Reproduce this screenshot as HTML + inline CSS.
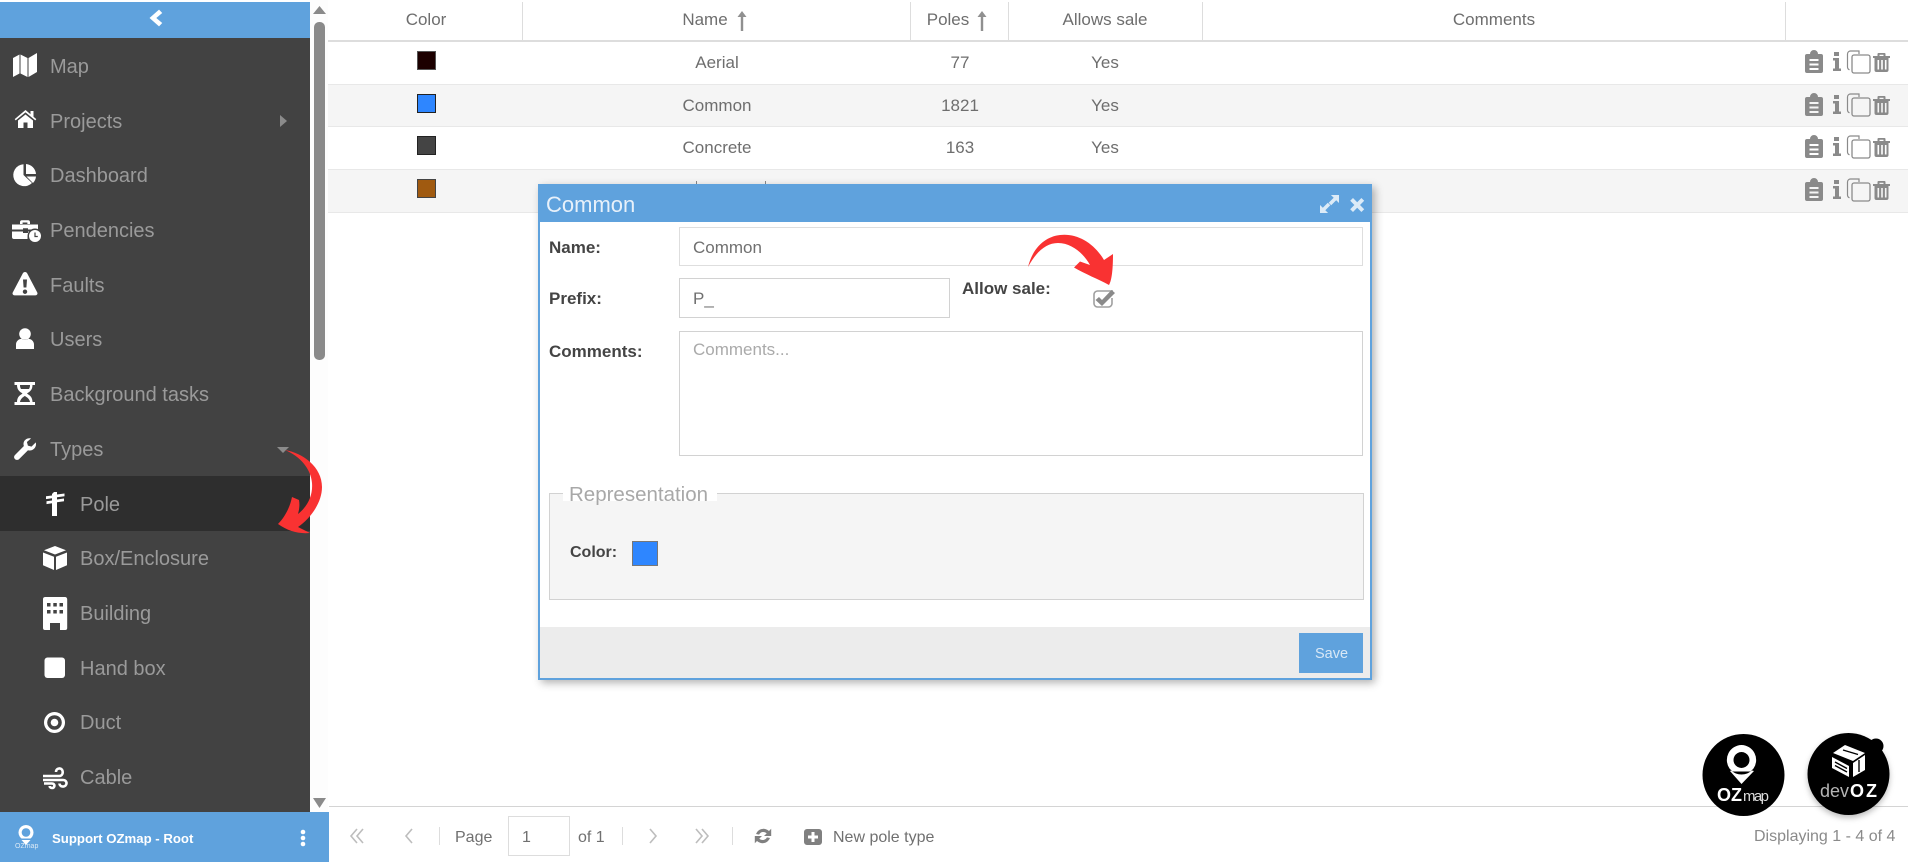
<!DOCTYPE html>
<html><head><meta charset="utf-8"><title>Pole types</title>
<style>
html,body{margin:0;padding:0;width:1908px;height:862px;overflow:hidden;background:#fff}
body{position:relative;font-family:"Liberation Sans",sans-serif;color:#666}
.a{position:absolute}
.t{position:absolute;white-space:nowrap}
.s{font-size:20px;line-height:30px;color:#9a9a9a;height:30px}
.c{transform:translateX(-50%);font-size:17px;line-height:24px;color:#6e6e6e}
.l{font-weight:bold;font-size:17px;line-height:24px;color:#444}
.b{font-size:16px;line-height:24px;color:#707070}
svg{position:absolute;left:0;top:0}
</style></head><body>
<!-- table rows -->
<div class="a" style="left:328px;top:40px;width:1580px;height:2px;background:#ddd"></div>
<div class="a" style="left:328px;top:84px;width:1580px;height:43px;background:#f5f5f5;border-top:1px solid #e8e8e8;border-bottom:1px solid #e8e8e8;box-sizing:border-box"></div>
<div class="a" style="left:328px;top:169px;width:1580px;height:44px;background:#f5f5f5;border-top:1px solid #e8e8e8;border-bottom:1px solid #e8e8e8;box-sizing:border-box"></div>
<div class="a" style="left:522px;top:2px;width:1px;height:38px;background:#ddd"></div>
<div class="a" style="left:910px;top:2px;width:1px;height:38px;background:#ddd"></div>
<div class="a" style="left:1008px;top:2px;width:1px;height:38px;background:#ddd"></div>
<div class="a" style="left:1202px;top:2px;width:1px;height:38px;background:#ddd"></div>
<div class="a" style="left:1785px;top:2px;width:1px;height:38px;background:#ddd"></div>
<span class="t c" style="left:426px;top:8px">Color</span>
<span class="t c" style="left:705px;top:8px">Name</span>
<span class="t c" style="left:948px;top:8px">Poles</span>
<span class="t c" style="left:1105px;top:8px">Allows sale</span>
<span class="t c" style="left:1494px;top:8px">Comments</span>
<span class="t c" style="left:717px;top:51px">Aerial</span><span class="t c" style="left:960px;top:51px">77</span><span class="t c" style="left:1105px;top:51px">Yes</span>
<span class="t c" style="left:717px;top:94px">Common</span><span class="t c" style="left:960px;top:94px">1821</span><span class="t c" style="left:1105px;top:94px">Yes</span>
<span class="t c" style="left:717px;top:136px">Concrete</span><span class="t c" style="left:960px;top:136px">163</span><span class="t c" style="left:1105px;top:136px">Yes</span>
<div class="a" style="left:696px;top:181px;width:1px;height:3px;background:#888"></div>
<div class="a" style="left:765px;top:181px;width:1px;height:3px;background:#888"></div>
<div class="a" style="left:417px;top:51px;width:19px;height:19px;box-sizing:border-box;border:1px solid #555;background:#1c0000"></div>
<div class="a" style="left:417px;top:94px;width:19px;height:19px;box-sizing:border-box;border:1px solid #222;background:#2e86ff"></div>
<div class="a" style="left:417px;top:136px;width:19px;height:19px;box-sizing:border-box;border:1px solid #222;background:#444"></div>
<div class="a" style="left:417px;top:179px;width:19px;height:19px;box-sizing:border-box;border:1px solid #444;background:#a05a10"></div>

<!-- sidebar -->
<div class="a" style="left:0;top:38px;width:310px;height:774px;background:#424242"></div>
<div class="a" style="left:0;top:2px;width:310px;height:36px;background:#5fa2dd"></div>
<div class="a" style="left:0;top:476px;width:310px;height:55px;background:#2e2e2e"></div>
<div class="a" style="left:310px;top:0;width:18px;height:812px;background:#fdfdfd"></div>
<div class="a" style="left:314px;top:22px;width:11px;height:338px;background:#8a8a8a;border-radius:5px"></div>
<div class="a" style="left:0;top:812px;width:329px;height:50px;background:#5fa2dd"></div>
<span class="t s" style="left:50px;top:52px">Map</span>
<span class="t s" style="left:50px;top:107px">Projects</span>
<span class="t s" style="left:50px;top:161px">Dashboard</span>
<span class="t s" style="left:50px;top:216px">Pendencies</span>
<span class="t s" style="left:50px;top:271px">Faults</span>
<span class="t s" style="left:50px;top:325px">Users</span>
<span class="t s" style="left:50px;top:380px">Background tasks</span>
<span class="t s" style="left:50px;top:435px">Types</span>
<span class="t s" style="left:80px;top:490px">Pole</span>
<span class="t s" style="left:80px;top:544px">Box/Enclosure</span>
<span class="t s" style="left:80px;top:599px">Building</span>
<span class="t s" style="left:80px;top:654px">Hand box</span>
<span class="t s" style="left:80px;top:708px">Duct</span>
<span class="t s" style="left:80px;top:763px">Cable</span>
<span class="t" style="left:52px;top:830px;font-size:13.2px;font-weight:bold;color:#fff;line-height:18px">Support OZmap - Root</span>
<span class="t" style="left:15px;top:842px;font-size:7px;color:#dbe9f6;line-height:10px">OZmap</span>

<!-- bottom toolbar -->
<div class="a" style="left:329px;top:806px;width:1579px;height:1px;background:#d4d4d4"></div>
<span class="t b" style="left:455px;top:826px">Page</span>
<div class="a" style="left:508px;top:816px;width:62px;height:40px;box-sizing:border-box;border:1px solid #ddd;background:#fff"></div>
<span class="t b" style="left:522px;top:826px">1</span>
<span class="t b" style="left:578px;top:826px">of 1</span>
<span class="t b" style="left:833px;top:826px">New pole type</span>
<span class="t b" style="left:1754px;top:825px;color:#8a8a8a">Displaying 1 - 4 of 4</span>
<div class="a" style="left:439px;top:827px;width:1px;height:18px;background:#ddd"></div>
<div class="a" style="left:622px;top:827px;width:1px;height:18px;background:#ddd"></div>
<div class="a" style="left:732px;top:827px;width:1px;height:18px;background:#ddd"></div>

<svg width="1908" height="862" viewBox="0 0 1908 862">
 <!-- header sort arrows -->
 <g fill="#909090"><path d="M742 11l-4.500 6h3.300v14h2.400V17h3.300z"/><path d="M982 11l-4.500 6h3.300v14h2.400V17h3.300z"/></g>
 <!-- scrollbar arrows -->
 <path d="M313 14h13l-6.500-8z" fill="#8a8a8a"/><path d="M313 798h13l-6.500 10z" fill="#8a8a8a"/>
 <!-- sidebar icons -->
 <g fill="#fff">
  <path d="M150 18l9-8 2.800 3-6 5 6 5-2.800 3z" stroke="#fff" stroke-width=".6"/>
  <path d="M13 58l6.500-3.500v19L13 77zM20.500 54.500l7 3.500v19l-7-3.500zM28.500 58l8.500-5v19l-8.500 5z"/>
  <path d="M25.500 110l5 4.200V111h3v5.700l2.800 2.400-1 1.300-9.800-8-9.800 8-1-1.300zM18 120.500l7.500-6 7.500 6V128h-5.500v-5.500h-4V128H18z"/>
  <path d="M23.500 164.200A11 11 0 1 0 32 183L23.500 175zM26 164a11 11 0 0 1 10 10H26zM26.500 176.500H36a11 11 0 0 1-3 6.500z"/>
  <path d="M20 224v-2c0-1 .8-1.800 1.800-1.800h6.400c1 0 1.800.8 1.800 1.800v2h-2.600v-1.500h-4.800V224zM12 224.500h26v5H28v-1.200h-5v1.200H12zM12 231.500h11v1.500h5v-1.500h4a8 8 0 0 0-4.500 7.500H14a2 2 0 0 1-2-2z"/>
 </g>
 <circle cx="35" cy="236" r="7.500" fill="#424242"/><circle cx="35" cy="236" r="6" fill="#fff"/>
 <path d="M35 232.500V236.500h2.800" fill="none" stroke="#424242" stroke-width="1.200"/>
 <g fill="#fff">
  <path d="M25 272c1 0 1.700.5 2.200 1.400l10 19c.8 1.400-.2 3-1.800 3H14.600c-1.600 0-2.600-1.600-1.800-3l10-19c.5-.9 1.300-1.400 2.200-1.400zm-2 7.500l.6 8h2.800l.6-8zm2 10a2.200 2.200 0 1 0 .01 0z" fill-rule="evenodd"/>
  <circle cx="25" cy="334" r="5.800"/><path d="M16 349v-4.500c0-3.500 2.800-5.500 5.500-5.800 1 .8 2.200 1.200 3.500 1.200s2.500-.4 3.500-1.200c2.700.3 5.500 2.300 5.500 5.800v4.500z"/>
  <path d="M14.500 382h20.500v3h-2.500c0 5.500-3.500 7-5.500 8.500 2 1.500 5.500 3 5.500 8.500h2.500v3H14.500v-3H17c0-5.500 3.500-7 5.500-8.500-2-1.500-5.500-3-5.500-8.500h-2.500zm5.500 3c0 1.500.2 2.700 1 4h8c.8-1.300 1-2.500 1-4zm4.800 11c-2.200 1.300-4.300 3-4.800 6h10c-.5-3-2.800-4.700-5.200-6z" fill-rule="evenodd"/>
  <path d="M31 438.500c-3.500-1-7.500 1.500-7.500 5.500 0 .8.100 1.400.4 2L15 455c-1.200 1.200-1.200 3 0 4.100 1.100 1.100 3 1.100 4.100 0l8.900-8.900c3.500 1.200 8-1.600 8-6 0-.7-.1-1.300-.2-1.800l-4.300 4.200-3.600-1-1-3.600z"/>
  <path d="M54 492h3v2.500l7.500-1v2.800l-7.500 1v2.200l7-1v2.800l-7 1V516h-5V503.300l-5.500.8v-2.800l5.500-.8v-2.200l-6 .8v-2.800l6-.8v-1.500z"/>
  <path d="M55 546l11 4.200-11 4.300-11-4.300zM43 552.500l11 4.300V570l-11-4.800zM67 552.500l-11 4.300V570l11-4.800z"/>
  <path d="M45 597h20a2.200 2.200 0 0 1 2.200 2.200V628a2 2 0 0 1-2 2H60v-7h-10v7h-5a2 2 0 0 1-2-2V599.200A2.200 2.200 0 0 1 45 597zM47 603v3.500h3.500V603zm6.300 0v3.500h3.500V603zm6.200 0v3.500H63V603zM47 610v3.500h3.500V610zm6.300 0v3.500h3.500V610zm6.200 0v3.500H63V610z" fill-rule="evenodd"/>
  <rect x="44.500" y="657.500" width="20.500" height="20.500" rx="3"/>
  <path d="M54.500 712a10.500 10.500 0 1 0 .01 0zm0 3.200a7.300 7.300 0 1 1-.01 0z" fill-rule="evenodd"/><circle cx="54.500" cy="722.500" r="3.800"/>
 </g>
 <g fill="none" stroke="#fff" stroke-width="2.600">
  <path d="M43 776h16c5 0 5-8 0-7.500-2.500.2-3 2.500-3 3.500M43 780h20c5 0 4.500 7-.5 6.500-2.200-.2-3-2-3-3"/>
  <path d="M44 783.500h8c3.200 0 3.200 4.500 0 4.500-1.500 0-2.300-1-2.300-2"/>
 </g>
 <path d="M280 115l7 6-7 6z" fill="#8b8b8b"/><path d="M277 447h12l-6 6z" fill="#8b8b8b"/>
 <!-- footer -->
 <g>
  <path d="M26 825a7.500 7.500 0 0 0-4.500 13.500h9A7.500 7.500 0 0 0 26 825zm0 3.200a4.300 4.300 0 1 1-.01 0z" fill="#fff" fill-rule="evenodd"/>
  <path d="M21.500 840h9l-4.500 5z" fill="#fff"/>
  <circle cx="303" cy="832" r="2.300" fill="#fff"/><circle cx="303" cy="838" r="2.300" fill="#fff"/><circle cx="303" cy="844" r="2.300" fill="#fff"/>
 </g>
 <!-- toolbar icons -->
 <g fill="none" stroke="#bdbdbd" stroke-width="1.600">
  <path d="M357 829l-6 7 6 7M363 829l-6 7 6 7"/><path d="M412 829l-6 7 6 7"/>
  <path d="M650 829l6 7-6 7"/><path d="M696 829l6 7-6 7M702 829l6 7-6 7"/>
 </g>
 <g fill="#808080">
  <path d="M756 834a8 8 0 0 1 13-3l2.200-2.200V836h-7.200l2.700-2.600a4.700 4.700 0 0 0-7.600 1.200zM770 838a8 8 0 0 1-13 3l-2.200 2.200V836h7.200l-2.700 2.600a4.700 4.700 0 0 0 7.600-1.200z"/>
  <path d="M807 829h12a3 3 0 0 1 3 3v10a3 3 0 0 1-3 3h-12a3 3 0 0 1-3-3v-10a3 3 0 0 1 3-3zm4.500 3v3.500H808v3h3.500V842h3v-3.500h3.500v-3h-3.500V832z" fill-rule="evenodd"/>
 </g>
 <!-- row action icons -->
 <g fill="#8a8a8a">
  <path d="M1807 54h3a4 4 0 0 1 8 0h3a2 2 0 0 1 2 2v15a2 2 0 0 1-2 2h-14a2 2 0 0 1-2-2V56a2 2 0 0 1 2-2zm2.500 5v2h9v-2zm0 4.500v2h9v-2zm0 4.500v2h9v-2z" fill-rule="evenodd"/>
  <path d="M1834 52h5v4h-5zM1833 58h6v10.500h2V71h-8v-2.500h2V60.500h-2z"/>
  <path d="M1859 54v-3h-8.500a3 3 0 0 0-3 3v13a3 3 0 0 0 2 2.800" fill="none" stroke="#8a8a8a" stroke-width="1.200"/>
  <rect x="1852" y="55" width="18" height="18" rx="2" fill="none" stroke="#8a8a8a" stroke-width="1.300"/>
  <path d="M1878.500 53h6a1 1 0 0 1 1 1v2h4.500v2h-1.500v12a2 2 0 0 1-2 2h-10a2 2 0 0 1-2-2V58h-1.500v-2h4.500v-2a1 1 0 0 1 1-1zm1 3h4v-1.200h-4zm-2 4v9.500h1.600V60zm3.700 0v9.500h1.600V60zm3.700 0v9.500h1.600V60z" fill-rule="evenodd"/>
 </g>
 <g fill="#8a8a8a" transform="translate(0,43)">
  <path d="M1807 54h3a4 4 0 0 1 8 0h3a2 2 0 0 1 2 2v15a2 2 0 0 1-2 2h-14a2 2 0 0 1-2-2V56a2 2 0 0 1 2-2zm2.500 5v2h9v-2zm0 4.500v2h9v-2zm0 4.500v2h9v-2z" fill-rule="evenodd"/>
  <path d="M1834 52h5v4h-5zM1833 58h6v10.500h2V71h-8v-2.500h2V60.500h-2z"/>
  <path d="M1859 54v-3h-8.500a3 3 0 0 0-3 3v13a3 3 0 0 0 2 2.800" fill="none" stroke="#8a8a8a" stroke-width="1.200"/>
  <rect x="1852" y="55" width="18" height="18" rx="2" fill="none" stroke="#8a8a8a" stroke-width="1.300"/>
  <path d="M1878.500 53h6a1 1 0 0 1 1 1v2h4.500v2h-1.500v12a2 2 0 0 1-2 2h-10a2 2 0 0 1-2-2V58h-1.500v-2h4.500v-2a1 1 0 0 1 1-1zm1 3h4v-1.200h-4zm-2 4v9.500h1.600V60zm3.700 0v9.500h1.600V60zm3.700 0v9.500h1.600V60z" fill-rule="evenodd"/>
 </g>
 <g fill="#8a8a8a" transform="translate(0,85)">
  <path d="M1807 54h3a4 4 0 0 1 8 0h3a2 2 0 0 1 2 2v15a2 2 0 0 1-2 2h-14a2 2 0 0 1-2-2V56a2 2 0 0 1 2-2zm2.500 5v2h9v-2zm0 4.500v2h9v-2zm0 4.500v2h9v-2z" fill-rule="evenodd"/>
  <path d="M1834 52h5v4h-5zM1833 58h6v10.500h2V71h-8v-2.500h2V60.500h-2z"/>
  <path d="M1859 54v-3h-8.500a3 3 0 0 0-3 3v13a3 3 0 0 0 2 2.800" fill="none" stroke="#8a8a8a" stroke-width="1.200"/>
  <rect x="1852" y="55" width="18" height="18" rx="2" fill="none" stroke="#8a8a8a" stroke-width="1.300"/>
  <path d="M1878.500 53h6a1 1 0 0 1 1 1v2h4.500v2h-1.500v12a2 2 0 0 1-2 2h-10a2 2 0 0 1-2-2V58h-1.500v-2h4.500v-2a1 1 0 0 1 1-1zm1 3h4v-1.200h-4zm-2 4v9.500h1.600V60zm3.700 0v9.500h1.600V60zm3.700 0v9.500h1.600V60z" fill-rule="evenodd"/>
 </g>
 <g fill="#8a8a8a" transform="translate(0,128)">
  <path d="M1807 54h3a4 4 0 0 1 8 0h3a2 2 0 0 1 2 2v15a2 2 0 0 1-2 2h-14a2 2 0 0 1-2-2V56a2 2 0 0 1 2-2zm2.500 5v2h9v-2zm0 4.500v2h9v-2zm0 4.500v2h9v-2z" fill-rule="evenodd"/>
  <path d="M1834 52h5v4h-5zM1833 58h6v10.500h2V71h-8v-2.500h2V60.500h-2z"/>
  <path d="M1859 54v-3h-8.500a3 3 0 0 0-3 3v13a3 3 0 0 0 2 2.800" fill="none" stroke="#8a8a8a" stroke-width="1.200"/>
  <rect x="1852" y="55" width="18" height="18" rx="2" fill="none" stroke="#8a8a8a" stroke-width="1.300"/>
  <path d="M1878.500 53h6a1 1 0 0 1 1 1v2h4.500v2h-1.500v12a2 2 0 0 1-2 2h-10a2 2 0 0 1-2-2V58h-1.500v-2h4.500v-2a1 1 0 0 1 1-1zm1 3h4v-1.200h-4zm-2 4v9.500h1.600V60zm3.700 0v9.500h1.600V60zm3.700 0v9.500h1.600V60z" fill-rule="evenodd"/>
 </g>
 <!-- sidebar red arrow -->
 <path d="M285 450C303 453 322 467 322 487C322 503 310 519 298 527L310 533C298 534 288 531 278 524C285 517 290 507 292 497L299 500C300 506 299 510 298 514C308 506 313 495 312 483C311 469 300 456 285 450z" fill="#f93232"/>
</svg>

<!-- modal -->
<div class="a" style="left:538px;top:184px;width:834px;height:496px;box-sizing:border-box;border:2px solid #5fa2dd;background:#fff;box-shadow:3px 3px 8px rgba(0,0,0,.3)"></div>
<div class="a" style="left:538px;top:184px;width:834px;height:38px;background:#5fa2dd"></div>
<span class="t" style="left:546px;top:191px;font-size:22px;line-height:28px;color:#e8f1fa">Common</span>
<span class="t l" style="left:549px;top:236px">Name:</span>
<span class="t l" style="left:549px;top:287px">Prefix:</span>
<span class="t l" style="left:549px;top:340px">Comments:</span>
<span class="t l" style="left:962px;top:277px">Allow sale:</span>
<div class="a" style="left:679px;top:227px;width:684px;height:39px;box-sizing:border-box;border:1px solid #dedede;background:#fff"></div>
<div class="a" style="left:679px;top:278px;width:271px;height:40px;box-sizing:border-box;border:1px solid #d2d2d2;background:#fff"></div>
<div class="a" style="left:679px;top:331px;width:684px;height:125px;box-sizing:border-box;border:1px solid #d2d2d2;background:#fff"></div>
<span class="t" style="left:693px;top:236px;font-size:17px;line-height:24px;color:#707070">Common</span>
<span class="t" style="left:693px;top:287px;font-size:17px;line-height:24px;color:#707070">P_</span>
<span class="t" style="left:693px;top:338px;font-size:17px;line-height:24px;color:#aaa">Comments...</span>
<div class="a" style="left:549px;top:493px;width:815px;height:107px;box-sizing:border-box;border:1px solid #d2d2d2;background:#f5f5f5"></div>
<div class="a" style="left:563px;top:485px;width:154px;height:16px;background:#fff"></div>
<span class="t" style="left:569px;top:480px;font-size:20.500px;line-height:30px;color:#a8a8a8">Representation</span>
<span class="t l" style="left:570px;top:541px;font-size:16px">Color:</span>
<div class="a" style="left:632px;top:541px;width:26px;height:25px;box-sizing:border-box;border:1px solid #777;background:#2e86ff"></div>
<div class="a" style="left:540px;top:627px;width:830px;height:51px;background:#ececec"></div>
<div class="a" style="left:1299px;top:633px;width:64px;height:40px;background:#5fa2dd"></div>
<span class="t" style="left:1315px;top:643px;font-size:14.500px;line-height:22px;color:#d8e8f6">Save</span>

<!-- overlay: modal icons, arrow, badges -->
<svg width="1908" height="862" viewBox="0 0 1908 862" style="pointer-events:none">
 <g fill="#dcebf7">
  <path d="M1339 195v8l-2.800-2.800-5 5-2.500-2.500 5-5-2.800-2.700zM1320 213v-8l2.800 2.800 5-5 2.500 2.500-5 5 2.800 2.700z"/>
  <path d="M1353 198l4.200 4.200 4.200-4.200 2.800 2.800-4.200 4.200 4.200 4.200-2.800 2.800-4.200-4.200-4.200 4.200-2.800-2.800 4.200-4.200-4.200-4.200z"/>
 </g>
 <path d="M1113 291h-15.500a3.500 3.500 0 0 0-3.500 3.500v9a3.500 3.500 0 0 0 3.500 3.500h11a3.500 3.500 0 0 0 3.500-3.500V298" fill="none" stroke="#a0a0a0" stroke-width="1.600"/>
 <path d="M1099 297l3 3 9.500-10 3.500 3-13 13-6.500-6z" fill="#8a8a8a"/>
 <path d="M1028 267C1034 243 1050 236 1060 235C1077 233 1094 243 1104 260L1113 254C1113 268 1112 280 1109 285C1098 279 1085 274 1074 267.500L1080 261.500L1090 265C1084 254 1072 243 1058 243C1046 243 1036 252 1028 267z" fill="#f93232"/>
 <!-- OZmap badge -->
 <circle cx="1743.500" cy="775" r="41" fill="#000"/>
 <path d="M1741.500 745a15 15 0 0 0-12 23.500l3 3h18l3-3a15 15 0 0 0-12-23.500zm0 7a8 8 0 1 1-.01 0z" fill="#fff" fill-rule="evenodd"/>
 <path d="M1730 771l1-.5c3 2.500 6.500 4 10.500 4s7.500-1.500 10.500-4l2 .5-12.500 13z" fill="#fff"/>
 <text x="1717" y="801" font-family="Liberation Sans,sans-serif" font-size="18" font-weight="bold" fill="#fff" textLength="25">OZ</text>
 <text x="1743" y="801" font-family="Liberation Sans,sans-serif" font-size="15" fill="#ddd" textLength="26">map</text>
 <!-- devOZ badge -->
 <circle cx="1848.500" cy="774" r="41" fill="#000" style="filter:drop-shadow(0 3px 3px rgba(0,0,0,.25))"/>
 <circle cx="1876" cy="746" r="7.500" fill="#000"/>
 <path d="M1833 753l12-8 20 8-12 8zM1832 757l17 9v11l-17-9zM1853 763l12-8v15l-12 7z" fill="#fff"/>
 <path d="M1843 750l15 4.500M1835 762l12 6.500M1835 765.500l12 6.500M1859 760v12" stroke="#000" stroke-width="1.400" fill="none"/>
 <text x="1820" y="797" font-family="Liberation Sans,sans-serif" font-size="18" fill="#b5b5b5" textLength="29">dev</text>
 <text x="1850" y="797" font-family="Liberation Sans,sans-serif" font-size="18" font-weight="bold" fill="#fff" textLength="27">OZ</text>
</svg>
</body></html>
